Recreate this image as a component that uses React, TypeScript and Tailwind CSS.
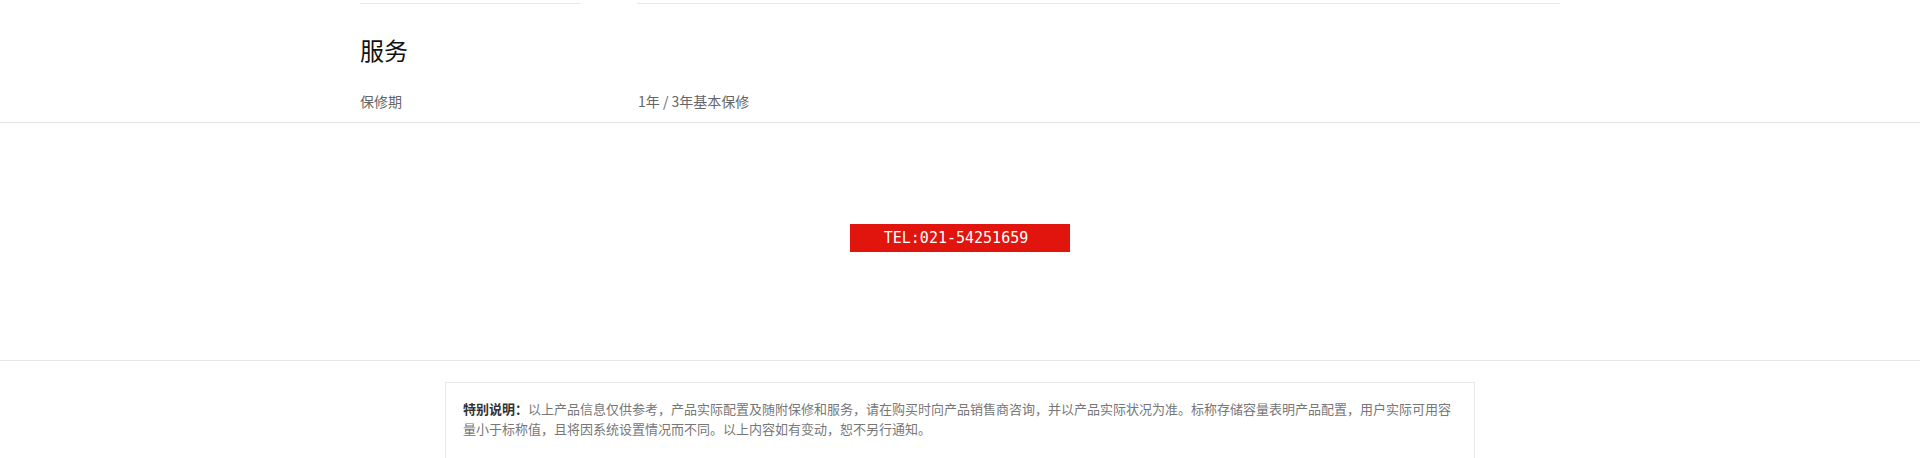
const cjk = "font-['Noto_Sans_CJK_SC','Microsoft_YaHei',sans-serif]";

function SpecRow({ label, value }: { label: string; value: string }) {
  return (
    <div className="flex h-[20px] items-center text-[14px] leading-[20px] text-[#666]">
      <div className="w-[220px] shrink-0">{label}</div>
      <div className="ml-[58px]">{value}</div>
    </div>
  );
}

export default function App() {
  return (
    <div className={`min-h-[458px] w-full bg-white ${cjk}`}>
      {/* tail of the previous spec group */}
      <div className="mx-auto flex w-[1200px]">
        <div className="h-[4px] w-[220px] border-b border-[#e8e8e8]" />
        <div className="ml-[57px] h-[4px] w-[923px] border-b border-[#e8e8e8]" />
      </div>

      <div className="mx-auto w-[1200px] pb-[11px]">
        <h3 className="mt-[28px] text-[24px] leading-[36px] font-normal text-[#111]">服务</h3>
        <div className="mt-[23px]">
          <SpecRow label="保修期" value="1年 / 3年基本保修" />
        </div>
      </div>

      <div className="h-[238px] border-t border-[#e6e6e6] pt-[101px] shadow-[inset_0_2px_3px_rgba(0,0,0,0.015)]">
        <div className="mx-auto flex h-[28px] w-[220px] items-center justify-center bg-[#e1140e] pr-[8px] font-['DejaVu_Sans_Mono',monospace] text-[15px] text-white">
          TEL:021-54251659
        </div>
      </div>

      <div className="border-t border-[#e6e6e6] pt-[21px]">
        <div className="mx-auto h-[80px] w-[1030px] border border-[#e8e8e8] px-[17px] pt-[16px] text-[13px] leading-[20px] text-[#777]">
          <span className="font-bold text-[#333]">特别说明：</span>
          以上产品信息仅供参考，产品实际配置及随附保修和服务，请在购买时向产品销售商咨询，并以产品实际状况为准。标称存储容量表明产品配置，用户实际可用容
          <br />
          量小于标称值，且将因系统设置情况而不同。以上内容如有变动，恕不另行通知。
        </div>
      </div>
    </div>
  );
}
